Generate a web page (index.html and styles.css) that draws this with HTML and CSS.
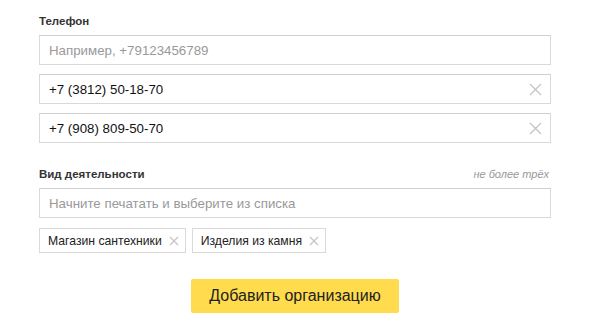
FILE: index.html
```html
<!DOCTYPE html>
<html lang="ru">
<head>
<meta charset="utf-8">
<link rel="stylesheet" href="styles.css">
</head>
<body>
<form class="form">
  <div class="field">
    <div class="label-row"><span class="label">Телефон</span></div>
    <div class="inputs">
      <div class="input"><span class="placeholder">Например, +79123456789</span></div>
      <div class="input"><span class="value">+7 (3812) 50-18-70</span>
        <svg class="clear" width="13" height="13" viewBox="0 0 13 13"><path d="M1 1L12 12M12 1L1 12" stroke="#c4c4c4" stroke-width="1.3" fill="none"/></svg>
      </div>
      <div class="input"><span class="value">+7 (908) 809-50-70</span>
        <svg class="clear" width="13" height="13" viewBox="0 0 13 13"><path d="M1 1L12 12M12 1L1 12" stroke="#c4c4c4" stroke-width="1.3" fill="none"/></svg>
      </div>
    </div>
  </div>
  <div class="field field-activity">
    <div class="label-row"><span class="label">Вид деятельности</span><span class="hint">не более трёх</span></div>
    <div class="input"><span class="placeholder">Начните печатать и выберите из списка</span></div>
    <div class="tags">
      <span class="tag">Магазин сантехники<svg class="tag-x" width="10" height="10" viewBox="0 0 10 10"><path d="M1 1L9 9M9 1L1 9" stroke="#c4c4c4" stroke-width="1.2" fill="none"/></svg></span>
      <span class="tag">Изделия из камня<svg class="tag-x" width="10" height="10" viewBox="0 0 10 10"><path d="M1 1L9 9M9 1L1 9" stroke="#c4c4c4" stroke-width="1.2" fill="none"/></svg></span>
    </div>
  </div>
  <div class="actions"><button type="button" class="btn">Добавить организацию</button></div>
</form>
</body>
</html>
```

FILE: styles.css
```css
* { box-sizing: border-box; }
html, body { margin: 0; padding: 0; background: #fff; }
body { font-family: "Liberation Sans", Arial, sans-serif; color: #222; }
.form { width: 600px; padding: 15px 49px 0 39px; }
.label-row { display: flex; justify-content: space-between; align-items: baseline; height: 18px; margin-bottom: 2px; }
.label { font-size: 11.5px; font-weight: bold; color: #333; }
.hint { font-size: 11px; font-style: italic; color: #999; padding-right: 2px; }
.inputs { display: flex; flex-direction: column; gap: 9px; }
.input { height: 30px; border: 1px solid #d9d9d9; border-top-color: #cfcfcf; display: flex; align-items: center; justify-content: space-between; padding: 0 8px 0 9px; font-size: 13.3px; }
.placeholder { color: #999; }
.value { color: #111; }
.clear { display: block; }
.field-activity { margin-top: 25px; }
.tags { display: flex; gap: 6px; margin-top: 10px; }
.tag { height: 25px; display: inline-flex; align-items: center; border: 1px solid #d9d9d9; padding: 0 6px 0 8px; font-size: 12.2px; color: #222; gap: 7px; }
.tag-x { display: block; }
.actions { display: flex; justify-content: center; margin-top: 26px; }
.btn { width: 208px; height: 34px; border: none; border-radius: 2px; background: #ffdb4d; font-family: "Liberation Sans", Arial, sans-serif; font-size: 16px; color: #222; padding: 0; }
```
